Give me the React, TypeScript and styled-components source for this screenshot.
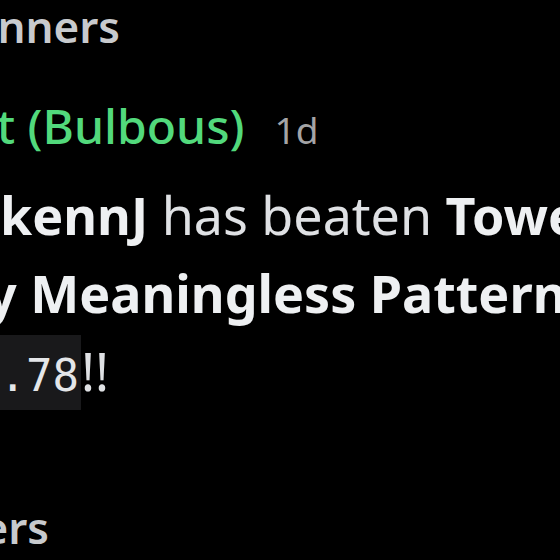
import { createGlobalStyle, styled } from 'styled-components';

const GlobalStyle = createGlobalStyle`
  html,
  body {
    margin: 0;
    padding: 0;
    background: #000;
  }

  body {
    font-family: 'Noto Sans', 'Liberation Sans', sans-serif;
    -webkit-font-smoothing: antialiased;
  }
`;

const App = () => {
  return (
    <>
      <GlobalStyle />
      <Frame>
        <ChannelName $shift={-57} $gap={-4}>
          Winners
        </ChannelName>
        <Header>
          <Author $shift={-64}>Bot (Bulbous)</Author>
          <Timestamp>1d</Timestamp>
        </Header>
        <MessageBody>
          <MessageLine $shift={0}>
            <Strong>kennJ</Strong> has beaten <Strong>Tower of</Strong>
          </MessageLine>
          <MessageLine $shift={-100}>
            <Strong>Very Meaningless Patterns</Strong>
          </MessageLine>
          <MessageLine $shift={-136}>
            <Code>12:04.78</Code>!!
          </MessageLine>
        </MessageBody>
        <ChannelName $shift={-128} $gap={82}>
          Winners
        </ChannelName>
      </Frame>
    </>
  );
};

export default App;

const Frame = styled.div`
  width: 560px;
  height: 560px;
  overflow: hidden;
  background: #000;

  display: flex;
  flex-direction: column;
`;

const ChannelName = styled.div<{ $shift: number; $gap: number }>`
  margin-left: ${({ $shift }) => $shift}px;
  margin-top: ${({ $gap }) => $gap}px;

  font-size: 44px;
  font-weight: 600;
  line-height: 60px;
  color: #c8cacd;
  white-space: nowrap;
`;

const Header = styled.div`
  display: flex;
  align-items: baseline;
  gap: 30px;

  margin-top: 40px;
`;

const Author = styled.span<{ $shift: number }>`
  margin-left: ${({ $shift }) => $shift}px;

  font-size: 48px;
  font-weight: 500;
  line-height: 60px;
  color: #52d97c;
  white-space: nowrap;
`;

const Timestamp = styled.span`
  font-size: 37px;
  font-weight: 400;
  color: #a4a4a6;
`;

const MessageBody = styled.div`
  margin-top: 20px;
`;

const MessageLine = styled.div<{ $shift: number }>`
  margin-left: ${({ $shift }) => $shift}px;

  font-size: 52px;
  font-weight: 400;
  line-height: 78px;
  color: #dfe1e4;
  white-space: nowrap;
`;

const Strong = styled.strong`
  font-weight: 700;
  color: #eef0f2;
`;

const Code = styled.code`
  padding: 15px 2px 9px 3px;

  font-family: 'DejaVu Sans Mono', 'Liberation Mono', monospace;
  font-size: 44px;
  background: #19191b;
  color: #e4e6e9;
`;
